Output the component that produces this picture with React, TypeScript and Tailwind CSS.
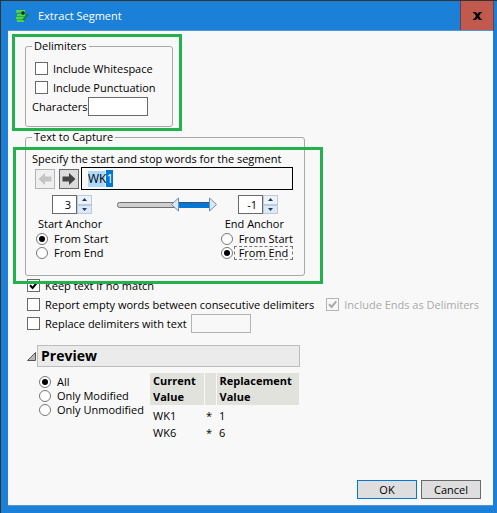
import React, { useEffect, useRef, useState } from 'react'

interface CheckProps {
  label: string
  defaultChecked?: boolean
  disabled?: boolean
}

function Check({ label, defaultChecked, disabled }: CheckProps) {
  return (
    <label className={`flex h-[19px] items-center gap-[5px] whitespace-nowrap ${disabled ? 'text-[#a9a9a9]' : ''}`}>
      <span className="relative block h-[13px] w-[13px]">
        <input
          type="checkbox"
          defaultChecked={defaultChecked}
          disabled={disabled}
          className="peer block h-[13px] w-[13px] appearance-none border border-[#6a6a6a] bg-white disabled:border-[#b4b4b4] disabled:bg-[#f8f8f8]"
        />
        <svg
          viewBox="0 0 13 13"
          fill="none"
          stroke="currentColor"
          strokeWidth="2"
          className="pointer-events-none absolute inset-0 hidden h-[13px] w-[13px] peer-checked:block"
        >
          <path d="M3 6.3 L5.6 9 L10.2 3.4" />
        </svg>
      </span>
      {label}
    </label>
  )
}

interface RadioProps {
  name: string
  label: string
  defaultChecked?: boolean
  focused?: boolean
}

function Radio({ name, label, defaultChecked, focused }: RadioProps) {
  return (
    <label className="flex h-[14px] items-center whitespace-nowrap">
      <input
        type="radio"
        name={name}
        defaultChecked={defaultChecked}
        className="grid h-[12px] w-[12px] shrink-0 appearance-none place-content-center rounded-full border border-[#777] bg-white before:hidden before:h-[6px] before:w-[6px] before:rounded-full before:bg-black checked:before:block"
      />
      <span
        className={`ml-px border border-dashed px-1 leading-3 ${
          focused ? 'border-[#777]' : 'border-transparent'
        }`}
      >
        {label}
      </span>
    </label>
  )
}

function Spinner({ label, initial }: { label: string; initial: number }) {
  const [value, setValue] = useState(initial)

  return (
    <div className="flex h-[19px]">
      <input
        aria-label={label}
        value={value}
        onChange={(e) => setValue(Number(e.target.value) || 0)}
        className="h-full w-[25px] border border-[#6a6a6a] bg-white px-[5px] text-right outline-none"
      />
      <div className="flex w-[15px] flex-col">
        <button
          aria-label={`Increase ${label}`}
          onClick={() => setValue(value + 1)}
          className="flex flex-1 items-center justify-center border border-[#b9cbe3] bg-[#eef3fa]"
        >
          <svg viewBox="0 0 5 3" className="h-[3px] w-[5px]">
            <path d="M0 3 L2.5 0 L5 3 Z" fill="#1d3a6b" />
          </svg>
        </button>
        <button
          aria-label={`Decrease ${label}`}
          onClick={() => setValue(value - 1)}
          className="flex flex-1 items-center justify-center border border-[#b9cbe3] bg-[#dfe8f5]"
        >
          <svg viewBox="0 0 5 3" className="h-[3px] w-[5px]">
            <path d="M0 0 L2.5 3 L5 0 Z" fill="#1d3a6b" />
          </svg>
        </button>
      </div>
    </div>
  )
}

function RangeSlider() {
  return (
    <svg viewBox="0 0 102 15" className="h-[15px] w-[102px]" role="img" aria-label="Segment range">
      <rect x="1.5" y="5.5" width="62" height="5" rx="2" fill="#cfcfcf" stroke="#6f6f6f" />
      <rect x="60" y="5" width="36" height="6" fill="#0078d7" />
      <path d="M60 5.5 H96" stroke="#3f4f60" />
      <path d="M62.5 1 V14 L55.5 7.5 Z" fill="#dce9f7" stroke="#6b8cb5" />
      <path d="M93.5 1 V14 L100.5 7.5 Z" fill="#dce9f7" stroke="#6b8cb5" />
    </svg>
  )
}

function SegmentInput() {
  const ref = useRef<HTMLInputElement>(null)

  useEffect(() => {
    ref.current?.focus()
    ref.current?.setSelectionRange(2, 3)
  }, [])

  return (
    <div className="relative ml-0.5 h-[23px] flex-1 border border-black">
      <span className="absolute left-[6px] top-[3px] h-4 w-[17px] bg-[#add8ff]" />
      <input
        ref={ref}
        aria-label="Segment text"
        defaultValue="WK1"
        className="relative block h-full w-full bg-transparent px-[6px] text-[12px] leading-4 outline-none selection:bg-[#0078d7] selection:text-white"
      />
    </div>
  )
}

function ArrowIcon({ className }: { className: string }) {
  return (
    <svg viewBox="0 0 14 14" className={className} fill="currentColor">
      <path d="M0.5 4.5 H7 V1 L13.5 7 L7 13 V9.5 H0.5 Z" />
    </svg>
  )
}

export default function App() {
  return (
    <div className="flex min-h-screen flex-col border-l border-t border-[#333] bg-[#1a80d8] font-['Open_Sans','Segoe_UI',sans-serif] text-[11px] leading-4 text-black">
      <header className="flex h-[29px] justify-between pr-[3px]">
        <div className="flex items-center gap-2 pl-[15px] text-white">
          <svg viewBox="0 0 14 14" className="h-[14px] w-[14px]">
            <path d="M0 1 H9 V4 H0 Z M1 5 H9 V7 H1 Z M0 8 H8 V10 H0 Z M1 11 H8 V13 H1 Z" fill="#4fd548" />
            <path d="M0 4 H9 M1 7.5 H9 M0 10.5 H8" stroke="#2aa84a" />
            <path d="M7 11 L12.5 5" stroke="#17803a" strokeWidth="2" />
            <circle cx="7" cy="4" r="1.7" fill="#06200d" />
          </svg>
          <h1>Extract Segment</h1>
        </div>
        <button aria-label="Close" className="flex h-[30px] w-[34px] items-center justify-center border border-t-0 border-[#6b3f48] bg-[#c1594f]">
          <svg viewBox="0 0 9 8" className="h-[8px] w-[9px]">
            <path d="M0 0 H3 L4.5 2 L6 0 H9 V1 H8 L6 4 L8 7 H9 V8 H6 L4.5 6 L3 8 H0 V7 H1 L3 4 L1 1 H0 Z" />
          </svg>
        </button>
      </header>

      <main className="mb-[7px] ml-[7px] mr-1 flex flex-1 flex-col border-b border-t border-[#5596cf] bg-[#f8f8f8] px-3 pb-[6px] pt-[7px]">
        <div className="relative ml-[5px] w-36">
          <fieldset className="h-[89px] rounded-[3px] border border-[#a8a8a8] px-[6px]">
            <legend className="px-0.5">Delimiters</legend>
            <div className="pl-[3px] pt-[5px]">
              <Check label="Include Whitespace" />
              <Check label="Include Punctuation" />
            </div>
            <label className="flex h-[19px] items-center justify-between pr-[18px]">
              Characters
              <input className="h-[19px] w-[60px] border border-[#6a6a6a] bg-white px-1 outline-none" />
            </label>
          </fieldset>
          <div className="pointer-events-none absolute -bottom-1 -left-[13px] -right-[13px] -top-1 border-[3px] border-[#22b14c]" />
        </div>

        <div className="relative ml-[5px] mt-0.5 w-[280px]">
          <fieldset className="h-[147px] rounded-[3px] border border-[#a8a8a8] px-[6px]">
            <legend className="px-0.5">Text to Capture</legend>
            <p className="mt-[6px] whitespace-nowrap">Specify the start and stop words for the segment</p>
            <div className="flex items-center gap-1 pl-[3px] pr-[5px]">
              <button
                disabled
                aria-label="Previous"
                className="flex h-5 w-5 items-center justify-center border border-[#b4b4b4] bg-[#f0f0f0] text-[#c4c4c4]"
              >
                <ArrowIcon className="h-[14px] w-[14px] shrink-0 rotate-180" />
              </button>
              <button
                aria-label="Next"
                className="-mr-1 flex h-5 w-5 items-center justify-center border border-[#6a6a6a] bg-[#dcdcdc] text-[#444]"
              >
                <ArrowIcon className="h-[14px] w-[14px] shrink-0" />
              </button>
              <SegmentInput />
            </div>
            <div className="mt-[5px] flex items-center gap-6 pl-5">
              <Spinner label="Start word" initial={3} />
              <RangeSlider />
              <div className="-ml-1">
                <Spinner label="End word" initial={-1} />
              </div>
            </div>
            <div className="mt-0.5 flex justify-between">
              <div className="pl-1">
                <p className="pl-0.5">Start Anchor</p>
                <Radio name="start" label="From Start" defaultChecked />
                <Radio name="start" label="From End" />
              </div>
              <div>
                <p className="pl-1">End Anchor</p>
                <Radio name="end" label="From Start" />
                <Radio name="end" label="From End" defaultChecked focused />
              </div>
            </div>
          </fieldset>
          <div className="pointer-events-none absolute -bottom-2 -left-3 -right-[18px] top-[18px] z-10 border-[3px] border-[#22b14c]" />
        </div>

        <div className="pl-[7px]">
          <Check label="Keep text if no match" defaultChecked />
          <div className="flex gap-3">
            <Check label="Report empty words between consecutive delimiters" />
            <Check label="Include Ends as Delimiters" defaultChecked disabled />
          </div>
          <div className="flex items-center gap-1">
            <Check label="Replace delimiters with text" />
            <input
              aria-label="Replacement text"
              className="h-[19px] w-[60px] border border-[#b4b4b4] bg-[#f8f8f8] px-1 outline-none"
            />
          </div>
        </div>

        <section className="mt-3 pl-[7px]">
          <div className="flex items-center gap-px">
            <svg viewBox="0 0 9 9" className="h-[9px] w-[9px]">
              <path d="M0.5 8.5 L8.5 0.5 V8.5 Z" fill="#b8b8b8" stroke="#555" />
            </svg>
            <h2 className="h-[22px] w-[263px] border border-[#bcbcbc] bg-[#ebebeb] px-[3px] text-[14px] font-bold leading-5">
              Preview
            </h2>
          </div>
          <div className="flex pl-3 pt-[6px]">
            <div className="w-[111px] pt-0.5">
              <Radio name="filter" label="All" defaultChecked />
              <Radio name="filter" label="Only Modified" />
              <Radio name="filter" label="Only Unmodified" />
            </div>
            <table className="w-[149px] table-fixed border-collapse text-left">
              <thead>
                <tr className="bg-[#e2e2dd] align-top font-bold">
                  <th className="w-[54px] border-r border-[#f8f8f8] px-[3px]">Current Value</th>
                  <th className="w-3 border-r border-[#f8f8f8]" />
                  <th className="px-[3px]">Replacement Value</th>
                </tr>
              </thead>
              <tbody className="leading-[17px]">
                <tr>
                  <td className="px-[3px] pt-0.5">WK1</td>
                  <td className="pl-0.5 pt-0.5">*</td>
                  <td className="px-[3px] pt-0.5">1</td>
                </tr>
                <tr>
                  <td className="px-[3px]">WK6</td>
                  <td className="pl-0.5">*</td>
                  <td className="px-[3px]">6</td>
                </tr>
              </tbody>
            </table>
          </div>
        </section>

        <footer className="mt-auto flex justify-end gap-1">
          <button className="h-[19px] w-[60px] border border-[#0078d7] bg-[#dedede] leading-4">OK</button>
          <button className="h-[19px] w-[60px] border border-[#6a6a6a] bg-[#dedede] leading-4">Cancel</button>
        </footer>
      </main>
    </div>
  )
}
